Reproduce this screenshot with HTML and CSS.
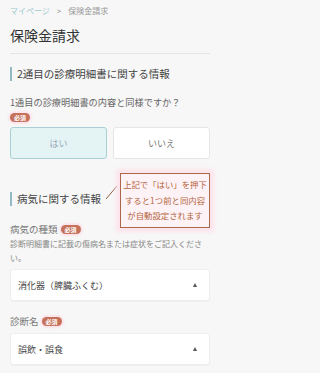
FILE: index.html
```html
<!DOCTYPE html>
<html lang="ja">
<head>
<meta charset="utf-8">
<link rel="stylesheet" href="styles.css">
</head>
<body>
<div class="page">
  <nav class="crumb"><span class="crumb-link">マイページ</span><span class="crumb-sep">&gt;</span><span class="crumb-cur">保険金請求</span></nav>
  <h1 class="title">保険金請求</h1>

  <h2 class="sec">2通目の診療明細書に関する情報</h2>
  <p class="q">1通目の診療明細書の内容と同様ですか？</p>
  <div class="req"><span class="badge">必須</span></div>
  <div class="choices">
    <div class="choice on">はい</div>
    <div class="choice">いいえ</div>
  </div>

  <h2 class="sec sec2">病気に関する情報</h2>
  <div class="label">病気の種類<span class="badge">必須</span></div>
  <p class="desc">診断明細書に記載の傷病名または症状をご記入ください。</p>
  <div class="select"><span>消化器（脾臓ふくむ）</span><span class="tri"></span></div>

  <div class="label label2">診断名<span class="badge">必須</span></div>
  <div class="select"><span>誤飲・誤食</span><span class="tri"></span></div>

  <svg class="pointer" width="14" height="16" viewBox="0 0 14 16"><line x1="1" y1="15" x2="12" y2="2" stroke="#9a5e45" stroke-width="1"/></svg>
  <div class="note">上記で「はい」を押下<br>すると1つ前と同内容<br>が自動設定されます</div>
</div>
</body>
</html>
```
FILE: styles.css
```css
html, body { margin: 0; padding: 0; }
body {
  background: #f7f7f7;
  font-family: "Noto Sans CJK JP", "Noto Sans", sans-serif;
  color: #444;
  width: 220px;
  height: 373px;
  overflow: hidden;
}
.page { position: relative; padding: 5px 10px 0; }
.crumb { font-size: 8px; line-height: 12px; display: flex; align-items: center; }
.crumb-link { color: #9cc9cd; }
.crumb-sep { color: #888; margin: 0 7px 0 7px; font-size: 8px; }
.crumb-cur { color: #999; }
.title {
  margin: 8px 0 0;
  font-size: 14px;
  line-height: 20px;
  font-weight: 400;
  color: #333;
  padding-bottom: 8px;
  border-bottom: 1px solid #e4e4e4;
}
.sec {
  margin: 13px 0 0;
  font-size: 10.5px;
  line-height: 14px;
  font-weight: 400;
  color: #444;
  border-left: 2px solid #92b9c4;
  padding-left: 5px;
}
.sec2 { margin-top: 33px; }
.q { margin: 15px 0 0; font-size: 9.2px; line-height: 13px; color: #666; }
.req { display: flex; margin-top: 4px; height: 9px; }
.badge {
  display: inline-block;
  background: #c5715a;
  color: #fff;
  font-size: 6px;
  line-height: 9px;
  height: 9px;
  padding: 0 4px;
  border-radius: 5px;
  box-shadow: 0 0 2px 2px #fbe3ea;
  font-weight: 700;
}
.choices { display: flex; gap: 6px; margin-top: 5px; }
.choice {
  flex: 1;
  height: 30px;
  border: 1px solid #e6e6e6;
  background: #fff;
  border-radius: 3px;
  display: flex;
  align-items: center;
  justify-content: center;
  font-size: 9px;
  color: #777;
}
.choice.on { background: #e4f3f4; border-color: #a9d1d5; color: #9ab; }
.label { margin-top: 17px; font-size: 9.5px; line-height: 13px; color: #777; display: flex; align-items: center; gap: 3px; }
.label2 { margin-top: 14px; }
.desc { margin: 1px 0 0; font-size: 8px; line-height: 13.5px; color: #888; }
.select {
  margin-top: 5px;
  height: 30px;
  background: #fff;
  border: 1px solid #eee;
  border-radius: 3px;
  box-shadow: 0 1px 1px rgba(0,0,0,0.03);
  display: flex;
  align-items: center;
  justify-content: space-between;
  padding: 0 12px 0 7px;
  font-size: 9px;
  color: #444;
}
.tri {
  width: 0; height: 0;
  border-left: 2.5px solid transparent;
  border-right: 2.5px solid transparent;
  border-bottom: 4px solid #555;
}
.note {
  position: absolute;
  left: 120px;
  top: 173px;
  width: 88px;
  height: 53px;
  border: 1px solid #a9684c;
  background: #fdf3f6;
  box-shadow: 0 0 4px 4px #fde4ec;
  color: #b4643c;
  font-size: 8.4px;
  line-height: 15.5px;
  text-align: center;
  display: flex;
  align-items: center;
  justify-content: center;
}
.pointer { position: absolute; left: 105px; top: 184px; }
```
